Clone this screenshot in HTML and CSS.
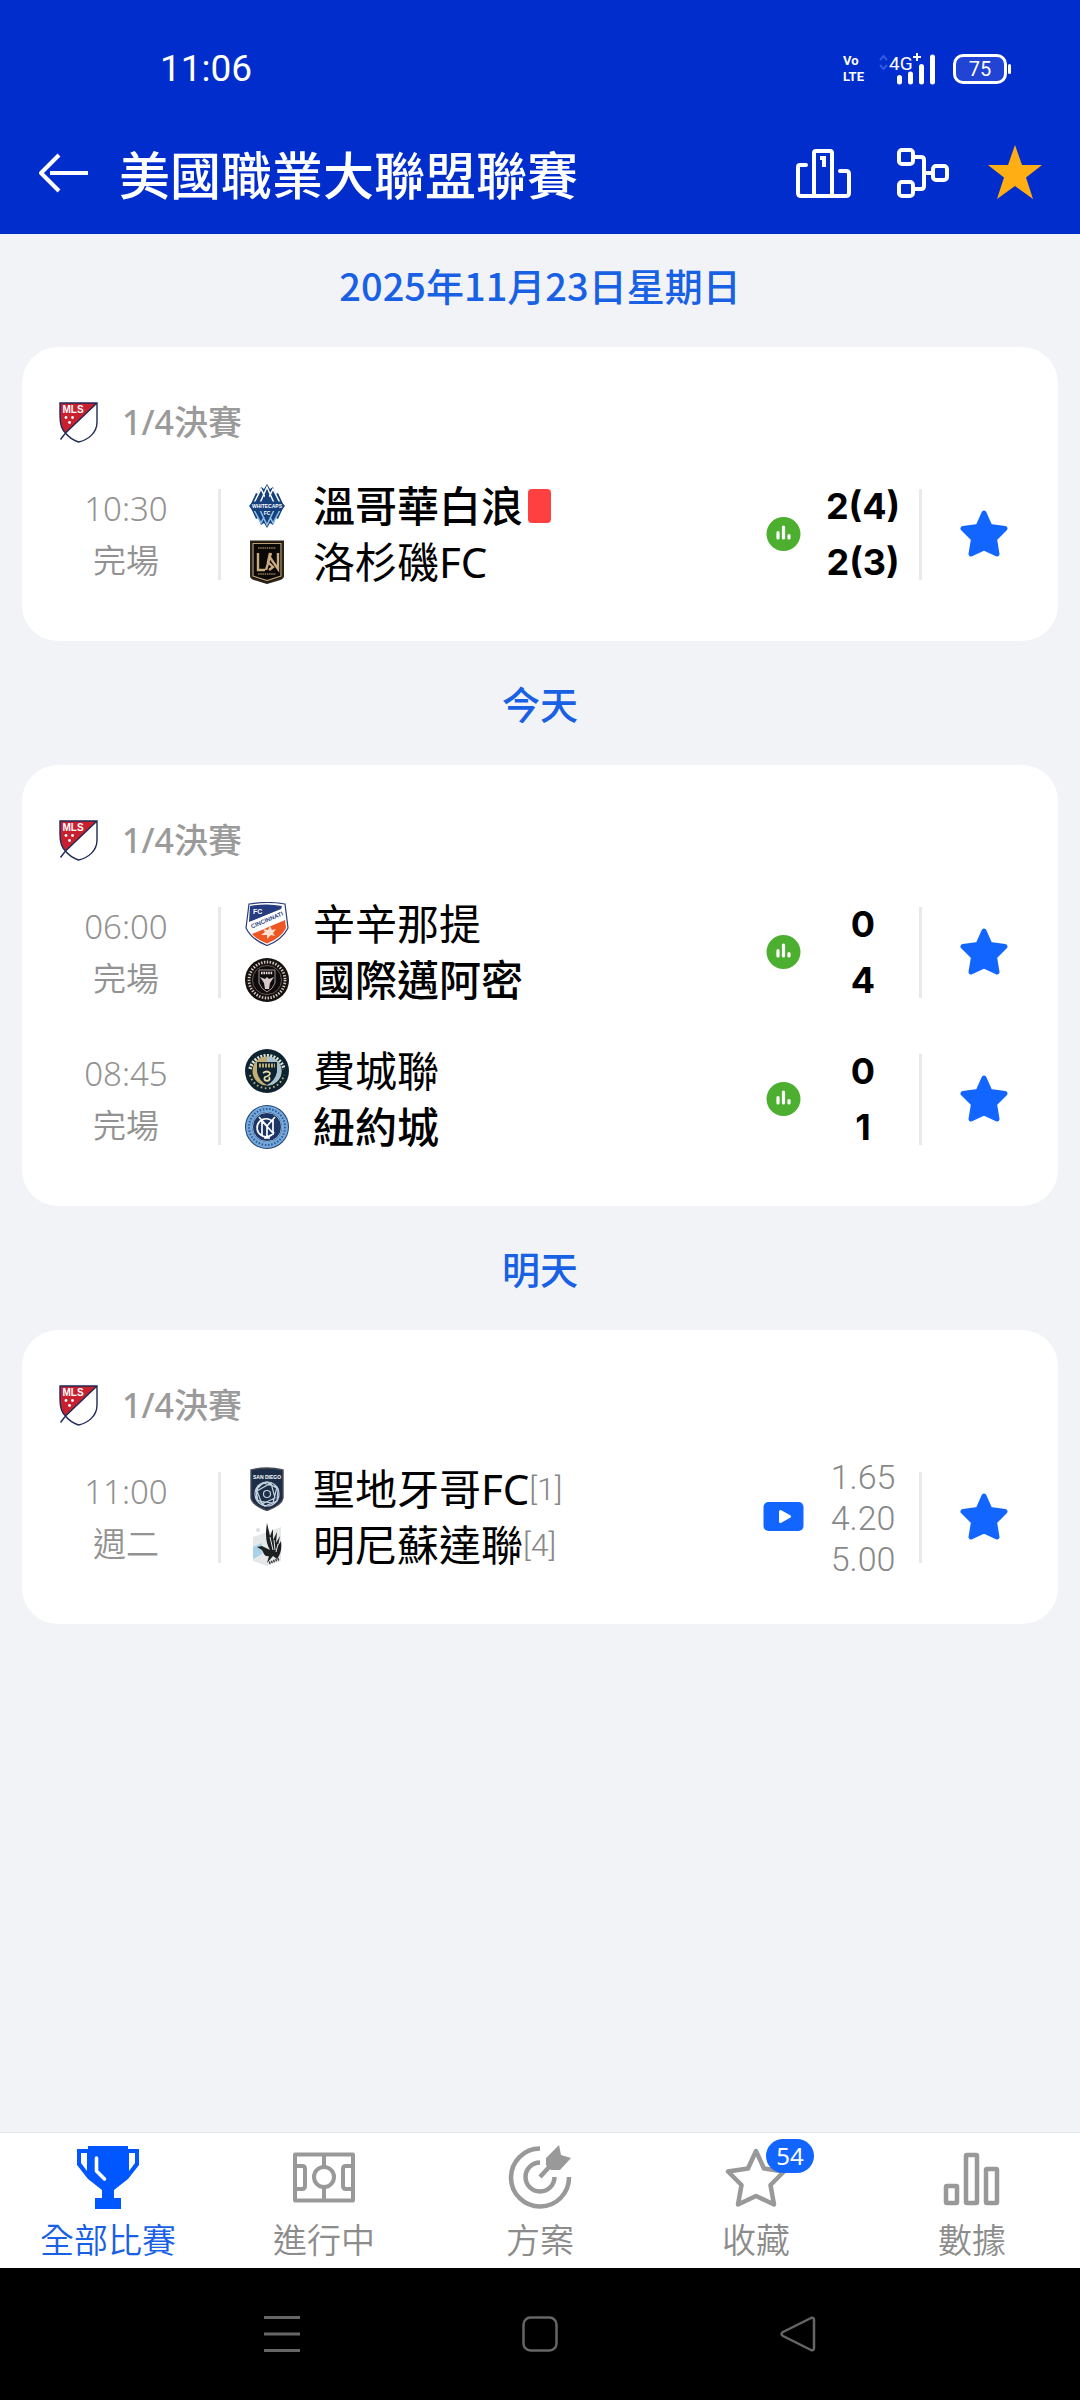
FILE: index.html
```html
<!DOCTYPE html>
<html lang="zh-Hant">
<head>
    <meta charset="UTF-8">
    <meta name="viewport" content="width=device-width, initial-scale=1.0">
    <title>美國職業大聯盟聯賽</title>
    <link rel="stylesheet" href="styles.css">
</head>
<body>
    <!-- Shared icons -->
    <svg class="sprite" aria-hidden="true">
        <symbol id="mls" viewBox="0 0 39 41">
            <path d="M1 1H38V20C38 31 29 38 19.500 40C14 38 9.500 35 6.500 31C2 27 1 21 1 14Z" fill="#fff"/>
            <path d="M1 1H38L6.500 31C2 27 1 21 1 14Z" fill="#c8202f"/>
            <path d="M1 1H38V20C38 31 29 38 19.500 40C14 38 9.500 35 6.500 31C2 27 1 21 1 14ZM38 1L6.500 31L1.500 37.500" fill="none" stroke="#1f2a55" stroke-width="1.400"/>
            <text x="3.500" y="11" class="mls-text">MLS</text>
            <g fill="#fff"><circle cx="7" cy="15.500" r="1.400"/><circle cx="13.500" cy="15.500" r="1.400"/><circle cx="10.500" cy="20.500" r="1.400"/></g>
        </symbol>
        <symbol id="stats" viewBox="0 0 34 34">
            <circle cx="17" cy="17" r="17" fill="#4caf2f"/>
            <path d="M11.500 15.500V21M17 10V21M22.500 18.500V21" stroke="#fff" stroke-width="3.200" stroke-linecap="round"/>
        </symbol>
        <symbol id="star" viewBox="0 0 48 48">
            <path d="M24 3L30 16.500L45 18.500L34.500 29L37 44L24 38L11 44L13.500 29L3 18.500L18 16.500Z" fill="#1266ff" stroke="#1266ff" stroke-width="5" stroke-linejoin="round"/>
        </symbol>
    </svg>

    <header class="header">
        <div class="status-bar">
            <span class="clock">11:06</span>
            <div class="status-icons">
                <span class="volte"><b>Vo</b><b>LTE</b></span>
                <svg class="signal" viewBox="0 0 58 34" aria-hidden="true">
                    <path d="M2 8L5.500 4L9 8M2 13L5.500 17L9 13" fill="none" stroke="#2f5be0" stroke-width="2"/>
                    <text x="11" y="18" class="signal-text">4G</text>
                    <path d="M35 5H43M39 1V9" stroke="#fff" stroke-width="2"/>
                    <path d="M21.500 25.500V30M32.500 22V30M43.500 14.500V30M54.500 5V30" stroke="#fff" stroke-width="5" stroke-linecap="round"/>
                </svg>
                <span class="battery">75</span>
            </div>
        </div>
        <div class="title-bar">
            <button class="icon-btn" aria-label="返回">
                <svg width="50" height="40" viewBox="0 0 50 40" fill="none" stroke="#fff" stroke-width="4" stroke-linejoin="round">
                    <path d="M21 2L3 20L21 38M12 20H50"/>
                </svg>
            </button>
            <h1>美國職業大聯盟聯賽</h1>
            <div class="actions">
                <button class="icon-btn" aria-label="積分榜">
                    <svg width="64" height="56" viewBox="0 0 64 56" fill="none" stroke="#fff" stroke-width="4" stroke-linejoin="round" stroke-linecap="round">
                        <path d="M11 20H5Q3 20 3 22V48Q3 51 6 51H51Q54 51 54 48V29Q54 26 51 26H45"/>
                        <path d="M19 50V8Q19 6 21 6H35Q37 6 37 8V50"/>
                        <path d="M25 13H29V22" stroke-width="4" stroke-linecap="butt" stroke-linejoin="miter"/>
                    </svg>
                </button>
                <button class="icon-btn" aria-label="賽程圖">
                    <svg width="56" height="56" viewBox="0 0 56 56" fill="none" stroke="#fff" stroke-width="4">
                        <rect x="4" y="5" width="14" height="14" rx="3"/>
                        <rect x="4" y="37" width="14" height="14" rx="3"/>
                        <rect x="38" y="21" width="14" height="14" rx="3"/>
                        <path d="M18 12H26Q29 12 29 15V41Q29 44 26 44H18M29 28H38"/>
                    </svg>
                </button>
                <button class="icon-btn" aria-label="收藏聯賽">
                    <svg width="56" height="56" viewBox="0 0 56 56">
                        <path d="M28 0L35 20H55L39 32.500L46 54L28 41L10 54L17 32.500L1 20H21Z" fill="#ffae13"/>
                    </svg>
                </button>
            </div>
        </div>
    </header>

    <main class="content">
        <h2 class="date">2025年11月23日星期日</h2>
        <section class="card">
            <div class="league"><svg class="league-logo" aria-hidden="true"><use href="#mls"/></svg><span>1/4決賽</span></div>
            <article class="match">
                <div class="time"><span>10:30</span><span>完場</span></div>
                <div class="teams">
                    <div class="team winner">
                        <svg class="crest" viewBox="0 0 44 44" aria-hidden="true">
                            <path d="M22 0L25 5L28 3L31 10L33 9L39 22L33 35L31 34L28 41L25 39L22 44L19 39L16 41L13 34L11 35L5 22L11 9L13 10L16 3L19 5Z" fill="#15407c"/>
                            <path d="M9 19L16 5L23 19M15 19L22 3L29 19M21 19L28 5L35 19" fill="none" stroke="#fff" stroke-width="1.500"/>
                            <path d="M22 8L27 18H17Z" fill="#15407c"/>
                            <path d="M9 26L16 39L19 33M15 26L22 41L29 26M35 26L28 39L25 33" fill="none" stroke="#8fc1ea" stroke-width="1.500"/>
                            <path d="M4 22L8 17.500H36L40 22L36 27H8Z" fill="#15407c"/>
                            <text x="22" y="24" class="crest-text">WHITECAPS</text>
                            <text x="22" y="30.500" class="crest-text">FC</text>
                        </svg>
                        <span class="name">溫哥華白浪</span><i class="red-card"></i>
                    </div>
                    <div class="team">
                        <svg class="crest" viewBox="0 0 44 44" aria-hidden="true">
                            <path d="M6 1.500H38V36Q38 38 35 39L22 43L9 39Q6 38 6 36Z" fill="#0b0908" stroke="#2d251b" stroke-width="2"/>
                            <path d="M8 3.500H36V36L22 40.500L8 36Z" fill="none" stroke="#b99f72" stroke-width="1.200"/>
                            <path d="M13 13V30H20M21 30L26 13M24 16L33 29V13M25 13L23 22L28 27L24 30" fill="none" stroke="#c8ac80" stroke-width="2.400"/>
                            <path d="M13 8H31M13 34H31" stroke="#927b56" stroke-width="1.300" stroke-dasharray="1.500 .7"/>
                        </svg>
                        <span class="name">洛杉磯FC</span>
                    </div>
                </div>
                <svg class="info" width="34" height="34" aria-hidden="true"><use href="#stats"/></svg>
                <div class="scores"><span>2(4)</span><span>2(3)</span></div>
                <button class="fav" aria-label="收藏"><svg width="48" height="48"><use href="#star"/></svg></button>
            </article>
        </section>

        <h2 class="date">今天</h2>
        <section class="card">
            <div class="league"><svg class="league-logo" aria-hidden="true"><use href="#mls"/></svg><span>1/4決賽</span></div>
            <article class="match">
                <div class="time"><span>06:00</span><span>完場</span></div>
                <div class="teams">
                    <div class="team">
                        <svg class="crest" viewBox="0 0 44 44" aria-hidden="true">
                            <path d="M4 2Q22-1 40 2L43 26Q37 38 22 43.500Q7 38 1 26Z" fill="#fff" stroke="#2b3b78" stroke-width="1.200"/>
                            <path d="M5 4Q22 1 37 4L36 7L4 20Z" fill="#263b80"/>
                            <path d="M40 18L41 26Q36 36 22 41.500Q12 38 7 32Z" fill="#ee5623"/>
                            <path d="M5 20L37 8L39 14L4 27Z" fill="#fff"/>
                            <text x="8" y="11.500" class="fc-text">FC</text>
                            <text x="22" y="20" class="cin-text" transform="rotate(-23 22 18)">CINCINNATI</text>
                            <path d="M16 33L20 30L18 27L23 28L25 24L27 28L31 27L28 31L30 34L26 33L22 37L22 33Z" fill="#fde1d3"/>
                        </svg>
                        <span class="name">辛辛那提</span>
                    </div>
                    <div class="team winner">
                        <svg class="crest" viewBox="0 0 44 44" aria-hidden="true">
                            <circle cx="22" cy="22" r="22" fill="#15110f"/>
                            <circle cx="22" cy="22" r="18" fill="none" stroke="#d6c6c4" stroke-width="2.800" stroke-dasharray="1.400 1.500"/>
                            <circle cx="22" cy="22" r="14.500" fill="#0c0a0a" stroke="#77696a" stroke-width=".8"/>
                            <path d="M14 12H30V25Q28 31 22 34Q16 31 14 25Z" fill="none" stroke="#a89496"/>
                            <path d="M16 15H28" stroke="#e9d8d9" stroke-width="2.500" stroke-dasharray="1.600 .8"/>
                            <path d="M15 19L20 21L22 19L24 21L29 19L25 25L24 31H20L19 25Z" fill="#d8c9c9"/>
                        </svg>
                        <span class="name">國際邁阿密</span>
                    </div>
                </div>
                <svg class="info" width="34" height="34" aria-hidden="true"><use href="#stats"/></svg>
                <div class="scores"><span>0</span><span>4</span></div>
                <button class="fav" aria-label="收藏"><svg width="48" height="48"><use href="#star"/></svg></button>
            </article>
            <article class="match">
                <div class="time"><span>08:45</span><span>完場</span></div>
                <div class="teams">
                    <div class="team">
                        <svg class="crest" viewBox="0 0 44 44" aria-hidden="true">
                            <circle cx="22" cy="22" r="22" fill="#0d2430"/>
                            <path d="M5 20A17.500 17.500 0 0 1 39 20" fill="none" stroke="#dfe3d6" stroke-width="3.400" stroke-dasharray="2 1.300"/>
                            <path d="M5 26A17.500 17.500 0 0 0 39 26" fill="none" stroke="#c2b27c" stroke-width="1.800" stroke-dasharray="1.600 2.600"/>
                            <circle cx="22" cy="22" r="14.500" fill="#c3ad75"/>
                            <path d="M22 7.500A14.500 14.500 0 0 1 22 36.500Z" fill="#a8c2cf"/>
                            <path d="M12 13H32V23Q30 32 22 36Q14 32 12 23Z" fill="#0d2430"/>
                            <path d="M14 16.500H30" stroke="#b9a873" stroke-width="4" stroke-dasharray="2 1"/>
                            <path d="M18 24Q22 21 25 24Q25 27 20 28Q18 31 22 32Q26 31 24 28" fill="none" stroke="#ead9a6" stroke-width="1.700"/>
                        </svg>
                        <span class="name">費城聯</span>
                    </div>
                    <div class="team winner">
                        <svg class="crest" viewBox="0 0 44 44" aria-hidden="true">
                            <circle cx="22" cy="22" r="22" fill="#20406f"/>
                            <circle cx="22" cy="22" r="18" fill="none" stroke="#73a8dc" stroke-width="6"/>
                            <circle cx="22" cy="22" r="18" fill="none" stroke="#31598f" stroke-width="2" stroke-dasharray="1.500 1.700"/>
                            <circle cx="22" cy="22" r="14.500" fill="#1d3564" stroke="#b5d2ec" stroke-width=".8"/>
                            <path d="M17 30V16L28 28V15M14 12L22 21L30 12M22 21V33M19 33H25M28 17A9 9 0 1 0 29 27" fill="none" stroke="#fff" stroke-width="1.700"/>
                        </svg>
                        <span class="name">紐約城</span>
                    </div>
                </div>
                <svg class="info" width="34" height="34" aria-hidden="true"><use href="#stats"/></svg>
                <div class="scores"><span>0</span><span>1</span></div>
                <button class="fav" aria-label="收藏"><svg width="48" height="48"><use href="#star"/></svg></button>
            </article>
        </section>

        <h2 class="date">明天</h2>
        <section class="card">
            <div class="league"><svg class="league-logo" aria-hidden="true"><use href="#mls"/></svg><span>1/4決賽</span></div>
            <article class="match">
                <div class="time"><span>11:00</span><span>週二</span></div>
                <div class="teams">
                    <div class="team">
                        <svg class="crest" viewBox="0 0 44 44" aria-hidden="true">
                            <path d="M6 3Q22-1 38 3V31Q37 38 22 43.500Q7 38 6 31Z" fill="#1b2d47" stroke="#4a4b55" stroke-width="1.400"/>
                            <text x="22" y="12" class="sd-text">SAN DIEGO</text>
                            <g fill="none" stroke="#c5d3de" stroke-width="1.200">
                                <circle cx="22" cy="27" r="12"/>
                                <circle cx="22" cy="27" r="3.500"/>
                                <path d="M22 15L33 22L32 34L20 39L11 31L13 19ZM26 16L30 31L17 37L12 24ZM18 16L32 20L28 36L13 34L11 23Z"/>
                            </g>
                        </svg>
                        <span class="name">聖地牙哥FC</span><span class="rank">[1]</span>
                    </div>
                    <div class="team">
                        <svg class="crest" viewBox="0 0 44 44" aria-hidden="true">
                            <path d="M8 14L36 4V38L22 43L8 38Z" fill="#e6e7e8"/>
                            <path d="M8 24L17 20V31L8 36Z" fill="#a9d1e8"/>
                            <circle cx="13" cy="7" r="2" fill="#dcdfe1"/>
                            <path d="M22 0C20 13 21 20 25 27L17 23L12 24L17 27C19 31 20 34 24 33L22 40L28 33L32 36C36 31 37 25 36 18L33 23L35 13L31 20L32 9L28 17L28 6L25 13Z" fill="#1d2021"/>
                            <path d="M25 14L28 27M29 17L30 27M33 21L31 29" stroke="#e6e7e8" stroke-width="1"/>
                            <path d="M24 40L34 36" stroke="#3b3d3f" stroke-width="2.500" stroke-dasharray="1.500 .8"/>
                        </svg>
                        <span class="name">明尼蘇達聯</span><span class="rank">[4]</span>
                    </div>
                </div>
                <svg class="info" width="40" height="29" viewBox="0 0 40 29" aria-hidden="true">
                    <rect width="40" height="29" rx="5" fill="#1266ff"/>
                    <path d="M17 9.500L26 14.500L17 19.500Z" fill="#fff" stroke="#fff" stroke-width="3" stroke-linejoin="round"/>
                </svg>
                <div class="odds"><span>1.65</span><span>4.20</span><span>5.00</span></div>
                <button class="fav" aria-label="收藏"><svg width="48" height="48"><use href="#star"/></svg></button>
            </article>
        </section>
    </main>

    <nav class="tabs">
        <a class="tab active" href="#">
            <svg width="64" height="64" viewBox="0 0 64 64" aria-hidden="true">
                <path d="M12 1H52V4H63V20L52 34L38 45V53H45V64H19V53H26V45L12 34L1 20V4H12ZM5 8V18L11 26V8ZM59 8H53V26L59 18Z" fill="#0057ff" fill-rule="evenodd"/>
                <path d="M20.500 13V26L28.500 34" fill="none" stroke="#fff" stroke-width="3.600" stroke-linecap="round" stroke-linejoin="round"/>
            </svg>
            <span>全部比賽</span>
        </a>
        <a class="tab" href="#">
            <svg width="64" height="64" viewBox="0 0 64 64" fill="none" stroke="#999" stroke-width="4" stroke-linejoin="round" aria-hidden="true">
                <path d="M3 9.500H61V55.500H3ZM32 9V22M32 42V55M3 21H10Q13 21 13 24V41Q13 44 10 44H3M61 21H54Q51 21 51 24V41Q51 44 54 44H61"/>
                <circle cx="32" cy="32" r="10"/>
            </svg>
            <span>進行中</span>
        </a>
        <a class="tab" href="#">
            <svg width="64" height="64" viewBox="0 0 64 64" fill="none" stroke="#999" stroke-width="4.500" aria-hidden="true">
                <path d="M32 3.500A29 29 0 1 0 61 32"/>
                <path d="M32 17.500A14.500 14.500 0 1 0 46.500 32"/>
                <path d="M32 32L43 20"/>
                <path d="M38 13L51 0L53 10L63 13L52 25H43L38 20Z" fill="#999" stroke="none"/>
            </svg>
            <span>方案</span>
        </a>
        <a class="tab" href="#">
            <svg width="64" height="64" viewBox="0 0 64 64" fill="none" stroke="#999" stroke-width="4.500" stroke-linejoin="round" aria-hidden="true">
                <path d="M32 6L40 23.500L60 26.500L46.500 40L50 59.500L32 51L14 59.500L17.500 40L4 26.500L24 23.500Z"/>
            </svg>
            <em class="badge">54</em>
            <span>收藏</span>
        </a>
        <a class="tab" href="#">
            <svg width="64" height="64" viewBox="0 0 64 64" fill="none" stroke="#999" stroke-width="4.500" aria-hidden="true">
                <rect x="6" y="41" width="11" height="17" rx="1"/>
                <rect x="26" y="10" width="11" height="48" rx="1"/>
                <rect x="46" y="24" width="11" height="34" rx="1"/>
            </svg>
            <span>數據</span>
        </a>
    </nav>

    <div class="system-nav">
        <button class="icon-btn" aria-label="選單"><svg width="36" height="36" viewBox="0 0 36 36" stroke="#666" stroke-width="3"><path d="M0 1.500H36M0 18H36M0 34.500H36"/></svg></button>
        <button class="icon-btn" aria-label="主頁"><svg width="36" height="36" viewBox="0 0 36 36" fill="none" stroke="#666" stroke-width="2.500"><rect x="1.500" y="1.500" width="33" height="33" rx="7"/></svg></button>
        <button class="icon-btn" aria-label="上一頁"><svg width="36" height="36" viewBox="0 0 36 36" fill="none" stroke="#666" stroke-width="2.500" stroke-linejoin="round"><path d="M31 2Q34 1 34 4V32Q34 35 31 34L3 20Q0 18 3 16Z"/></svg></button>
    </div>
</body>
</html>
```
FILE: styles.css
```css
* {
    margin: 0;
    padding: 0;
    box-sizing: border-box;
}

body {
    font-family: "Noto Sans", "Noto Sans CJK TC", sans-serif;
    background: #f2f3f7;
    min-height: 100vh;
    display: flex;
    flex-direction: column;
}

button {
    background: none;
    border: none;
    cursor: pointer;
}

svg {
    display: block;
    flex-shrink: 0;
}

.sprite {
    display: none;
}

/* Header */
.header {
    background: #002dcb;
    color: #fff;
}

.status-bar {
    display: flex;
    justify-content: space-between;
    align-items: center;
    height: 112px;
    padding: 26px 73px 0 160px;
}

.clock {
    font-family: Roboto, sans-serif;
    font-size: 37px;
    line-height: 44px;
}

.status-icons {
    display: flex;
    align-items: center;
}

.volte {
    display: flex;
    flex-direction: column;
    font-family: Roboto, sans-serif;
    font-size: 13px;
    line-height: 16px;
    margin-right: 14px;
}

.signal {
    width: 58px;
    height: 34px;
    margin-right: 17px;
}

.signal-text {
    font-family: Roboto, sans-serif;
    font-size: 19px;
    fill: #fff;
}

.battery {
    position: relative;
    width: 54px;
    height: 30px;
    border: 3px solid #fff;
    border-radius: 10px;
    background: #2144d4;
    font-family: Roboto, sans-serif;
    font-size: 20px;
    line-height: 24px;
    text-align: center;
}

.battery::after {
    content: "";
    position: absolute;
    top: 7px;
    right: -7px;
    width: 3px;
    height: 10px;
    border-radius: 2px;
    background: #fff;
}

.title-bar {
    display: flex;
    align-items: center;
    height: 122px;
    padding: 0 37px 0 38px;
}

.title-bar h1 {
    flex: 1;
    margin-left: 31px;
    font-family: "Noto Sans CJK TC", sans-serif;
    font-size: 51px;
    font-weight: 500;
    line-height: 60px;
}

.actions {
    display: flex;
    gap: 36px;
}

/* Match list */
.content {
    flex: 1;
}

.date {
    padding: 31px 0 42px;
    font-family: "Noto Sans CJK TC", sans-serif;
    font-size: 38px;
    font-weight: 500;
    line-height: 40px;
    text-align: center;
    color: #1860e4;
}

.card {
    margin: 0 22px 11px;
    padding: 35px 12px 34px;
    border-radius: 36px;
    background: #fff;
}

.league {
    display: flex;
    align-items: center;
    gap: 24px;
    height: 78px;
    padding: 2px 0 0 25px;
    font-size: 34px;
    font-weight: 500;
    line-height: 40px;
    color: #9a9a9a;
}

.league-logo {
    width: 39px;
    height: 41px;
}

.mls-text {
    font-family: "Liberation Sans", sans-serif;
    font-size: 10px;
    font-weight: 700;
    fill: #fff;
}

.match {
    display: flex;
    align-items: center;
    height: 147px;
}

.time {
    display: flex;
    flex-direction: column;
    width: 184px;
    padding-top: 2px;
    font-size: 33px;
    font-weight: 350;
    line-height: 52px;
    text-align: center;
    color: #929292;
}

.teams {
    flex: 1;
    position: relative;
    padding-left: 27px;
}

.teams::before,
.fav::before {
    content: "";
    position: absolute;
    top: 50%;
    left: 0;
    width: 3px;
    height: 91px;
    margin-top: -45px;
    background: #e9e9e9;
}

.team {
    display: flex;
    align-items: center;
    height: 56px;
    font-size: 42px;
    line-height: 56px;
    font-weight: 400;
    color: #000;
}

.team.winner {
    font-weight: 500;
}

.crest {
    width: 44px;
    height: 44px;
    margin-right: 24px;
}

.crest-text,
.fc-text,
.cin-text,
.sd-text {
    font-family: "Liberation Sans", sans-serif;
    font-weight: 700;
    font-size: 5px;
    text-anchor: middle;
    fill: #fff;
}

.fc-text {
    font-size: 7px;
    text-anchor: start;
}

.cin-text {
    font-size: 6px;
    fill: #263b80;
}

.red-card {
    width: 23px;
    height: 34px;
    margin-left: 5px;
    border-radius: 4px;
    background: #ff4040;
}

.rank {
    font-family: Roboto, sans-serif;
    font-size: 32px;
    font-weight: 300;
    color: #888;
}

.info {
    width: 47px;
}

.scores,
.odds {
    display: flex;
    flex-direction: column;
    width: 112px;
    text-align: center;
}

.scores {
    font-family: Inter, sans-serif;
    font-size: 36px;
    font-weight: 700;
    line-height: 56px;
    color: #000;
}

.odds {
    padding-top: 3px;
    font-family: Roboto, sans-serif;
    font-size: 34px;
    font-weight: 300;
    line-height: 41px;
    color: #888;
}

.fav {
    position: relative;
    display: flex;
    justify-content: center;
    width: 127px;
    padding-left: 3px;
}

/* Bottom tabs */
.tabs {
    display: flex;
    border-top: 1px solid #e6e7ea;
    background: #fff;
}

.tab {
    position: relative;
    flex: 1;
    display: flex;
    flex-direction: column;
    align-items: center;
    gap: 11px;
    padding: 12px 0 8px;
    font-size: 34px;
    font-weight: 350;
    line-height: 40px;
    color: #8c8c8c;
    text-decoration: none;
}

.tab.active {
    color: #1860e4;
}

.badge {
    position: absolute;
    top: 6px;
    left: 50%;
    width: 48px;
    height: 34px;
    margin-left: 10px;
    border-radius: 17px;
    background: #1266ff;
    color: #fff;
    font-size: 24px;
    font-style: normal;
    font-weight: 400;
    line-height: 34px;
    text-align: center;
}

/* Android buttons */
.system-nav {
    display: flex;
    justify-content: center;
    align-items: center;
    gap: 222px;
    height: 132px;
    background: #000;
}
```
